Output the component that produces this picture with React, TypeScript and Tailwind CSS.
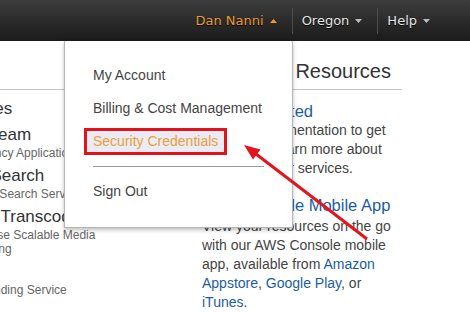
import React from "react";

const deploymentServices = [
  { name: "CloudFormation", desc: "Templated AWS Resource Creation" },
  { name: "CloudTrail", desc: "User Activity and Change Tracking" },
  { name: "CloudWatch", desc: "Resource and Application Monitoring" },
  { name: "Elastic Beanstalk", desc: "AWS Application Container" },
];

const appServices = [
  { name: "AppStream", desc: "Low Latency Application Streaming", icon: "bg-[#e05243]" },
  { name: "CloudSearch", desc: "Managed Search Service", icon: "bg-[#f58536]" },
  { name: "Elastic Transcoder", desc: "Easy-to-use Scalable Media Transcoding", icon: "bg-[#d9672e]" },
  { name: "SES", desc: "Email Sending Service", icon: "bg-[#c7511f]" },
];

function Caret({ up, color }: { up?: boolean; color: string }) {
  return (
    <svg width="7" height="4" viewBox="0 0 7 4" className="shrink-0">
      <polygon points={up ? "0,4 7,4 3.5,0" : "0,0 7,0 3.5,4"} fill={color} />
    </svg>
  );
}

function NavItem({ label, active }: { label: string; active?: boolean }) {
  return (
    <div className="flex items-center gap-[6px] pl-[9px] pr-[15px]">
      <span className={active ? "text-[#eb9b2c]" : "text-[#e4e4e4]"}>{label}</span>
      <Caret up={active} color={active ? "#eb9b2c" : "#bdbdbd"} />
    </div>
  );
}

function Separator() {
  return <span className="h-[26px] w-px bg-[#4d4d4d]" />;
}

function ServiceItem({ name, desc, icon }: { name: string; desc: string; icon: string }) {
  return (
    <div className="flex gap-[4px]">
      <span className={`w-[30px] h-[30px] shrink-0 rounded-sm ${icon}`} />
      <div className="w-[200px]">
        <div className="text-[17px] leading-[20px] text-[#333]">{name}</div>
        <div className="pt-[1px] text-[12px] leading-[14px] text-[#666]">{desc}</div>
      </div>
    </div>
  );
}

export default function App() {
  return (
    <div className="relative w-[470px] h-[312px] overflow-hidden bg-white font-['Liberation_Sans',Arial,sans-serif]">
      {/* Console top bar */}
      <header className="h-[41px] flex items-center justify-end pr-[25px] bg-linear-to-b from-[#3d3d3d] to-[#1b1b1b] font-['DejaVu_Sans',Verdana,sans-serif] text-[13px] [text-shadow:0_1px_0_#000]">
        <NavItem label="Dan Nanni" active />
        <Separator />
        <NavItem label="Oregon" />
        <Separator />
        <NavItem label="Help" />
      </header>

      <div className="flex">
        {/* Services */}
        <section className="-ml-[398px] w-[588px] shrink-0">
          <h2 className="pt-[18px] pb-[6px] text-[20px] leading-[24px] text-[#333] border-b border-[#c6c6c6]">
            Amazon Web Services
          </h2>
          <div className="flex gap-[10px] mt-[9px]">
            <div className="w-[300px] flex flex-col gap-[6px]">
              <h3 className="text-[17px] leading-[20px] text-[#333]">Deployment &amp; Management</h3>
              {deploymentServices.map((s) => (
                <ServiceItem key={s.name} {...s} icon="bg-[#759c3e]" />
              ))}
            </div>
            <div className="w-[234px] flex flex-col gap-[6px]">
              <h3 className="text-[17px] leading-[20px] text-[#333]">App Services</h3>
              {appServices.map((s) => (
                <ServiceItem key={s.name} {...s} />
              ))}
            </div>
          </div>
        </section>

        {/* Additional resources */}
        <section className="ml-[12px] w-[200px] shrink-0">
          <h2 className="pt-[18px] pb-[6px] text-[20px] leading-[24px] text-[#333] border-b border-[#c6c6c6]">
            Additional Resources
          </h2>
          <h3 className="mt-[11px] text-[16.5px] leading-[20px] text-[#1c5ca5]">Getting Started</h3>
          <p className="text-[14px] leading-[19px] text-[#444]">
            See our documentation to get started and learn more about how to use our services.
          </p>
          <h3 className="mt-[17px] text-[16.5px] leading-[20px] text-[#1c5ca5]">AWS Console Mobile App</h3>
          <p className="mt-[2px] text-[14px] leading-[19px] text-[#444]">
            View your resources on the go with our AWS Console mobile app, available from{" "}
            <a className="text-[#1c5ca5]">Amazon Appstore</a>, <a className="text-[#1c5ca5]">Google Play</a>, or{" "}
            <a className="text-[#1c5ca5]">iTunes</a>.
          </p>
        </section>
      </div>

      {/* Account menu */}
      <div className="absolute left-[64px] top-[41px] w-[229px] h-[187px] bg-white border border-t-0 border-[#b5b5b5] shadow-[0_2px_4px_rgba(0,0,0,0.25)]">
        <div className="pt-[18px] text-[14px] text-[#444]">
          <div className="h-[33px] flex items-center pl-[28px]">My Account</div>
          <div className="h-[33px] flex items-center pl-[28px]">Billing &amp; Cost Management</div>
          <div className="h-[33px] flex items-center pl-[19px]">
            <div className="h-[27px] w-[143px] flex items-center pl-[6px] border-[3px] border-[#e3131b] bg-[#ebebf4] text-[#ec9e3c]">
              Security Credentials
            </div>
          </div>
          <div className="mt-[8px] ml-[28px] w-[171px] h-px bg-[#9a9a9a]" />
          <div className="mt-[8px] h-[33px] flex items-center pl-[28px]">Sign Out</div>
        </div>
      </div>

      {/* Annotation arrow */}
      <svg className="absolute inset-0 pointer-events-none" width="470" height="312" viewBox="0 0 470 312">
        <line x1="367" y1="239" x2="256" y2="154" stroke="#e5141c" strokeWidth="3" />
        <polygon points="244,145 260.5,149.5 253,159.5" fill="#e5141c" />
      </svg>
    </div>
  );
}
